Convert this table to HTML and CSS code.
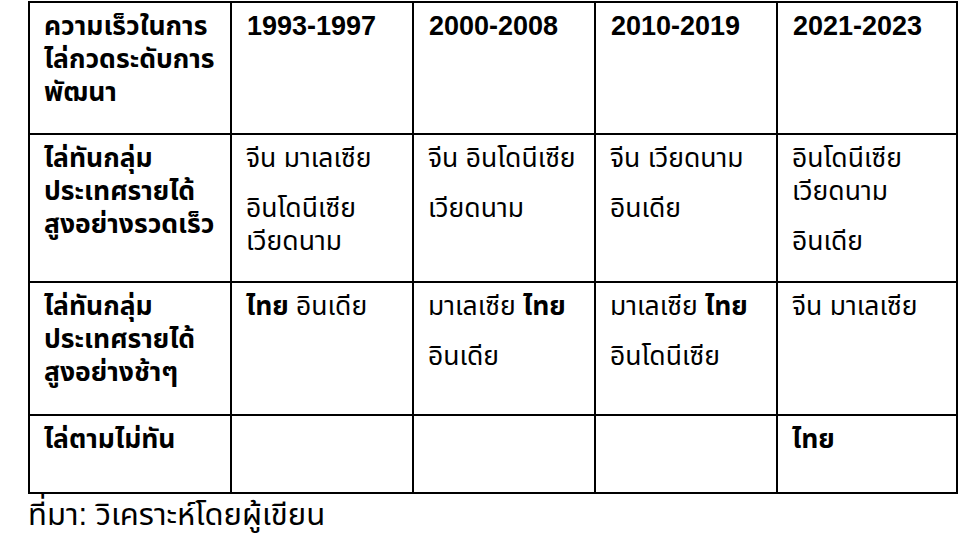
FILE: index.html
```html
<!DOCTYPE html>
<html lang="th">
<head>
<meta charset="utf-8">
<link rel="stylesheet" href="styles.css">
</head>
<body>
<table class="grid">
  <colgroup>
    <col class="c-label">
    <col class="c-period">
    <col class="c-period">
    <col class="c-period">
    <col class="c-last">
  </colgroup>
  <tr class="r-head">
    <th>ความเร็วในการไล่กวดระดับการพัฒนา</th>
    <th class="yr">1993-1997</th>
    <th class="yr">2000-2008</th>
    <th class="yr">2010-2019</th>
    <th class="yr">2021-2023</th>
  </tr>
  <tr class="r-fast">
    <th>ไล่ทันกลุ่มประเทศรายได้สูงอย่างรวดเร็ว</th>
    <td><p>จีน มาเลเซีย</p><p>อินโดนีเซีย เวียดนาม</p></td>
    <td><p>จีน อินโดนีเซีย</p><p>เวียดนาม</p></td>
    <td><p>จีน เวียดนาม</p><p>อินเดีย</p></td>
    <td><p>อินโดนีเซีย เวียดนาม</p><p>อินเดีย</p></td>
  </tr>
  <tr class="r-slow">
    <th>ไล่ทันกลุ่มประเทศรายได้สูงอย่างช้าๆ</th>
    <td><p><b>ไทย</b> อินเดีย</p></td>
    <td><p>มาเลเซีย <b>ไทย</b></p><p>อินเดีย</p></td>
    <td><p>มาเลเซีย <b>ไทย</b></p><p>อินโดนีเซีย</p></td>
    <td><p>จีน มาเลเซีย</p></td>
  </tr>
  <tr class="r-none">
    <th>ไล่ตามไม่ทัน</th>
    <td></td>
    <td></td>
    <td></td>
    <td><p><b>ไทย</b></p></td>
  </tr>
</table>
<p class="source">ที่มา: วิเคราะห์โดยผู้เขียน</p>
</body>
</html>
```

FILE: styles.css
```css
html, body {
  margin: 0;
  padding: 0;
  background: #ffffff;
}

body {
  padding: 1px 0 0 28px;
  font-family: "Liberation Sans", "Noto Sans Thai", "Noto Sans", sans-serif;
  color: #000000;
}

.grid {
  border-collapse: collapse;
  table-layout: fixed;
  width: 928px;
}

.c-label { width: 202px; }
.c-period { width: 182px; }
.c-last { width: 180px; }

.grid th,
.grid td {
  border: 2px solid #000000;
  vertical-align: top;
  text-align: left;
  padding: 7px 14px 0 14px;
  font-size: 26.5px;
  line-height: 33px;
}

.grid th {
  font-weight: bold;
}

.grid th.yr {
  font-size: 27px;
  padding-left: 15px;
}

.grid td {
  font-weight: normal;
}

.grid p {
  margin: 0 0 17px 0;
}

.grid p:last-child {
  margin-bottom: 0;
}

.r-head { height: 132px; }
.r-fast { height: 148px; }
.r-slow { height: 133px; }
.r-none { height: 78px; }

.source {
  margin: 3px 0 0 0;
  font-size: 31px;
  line-height: 36px;
}
```
